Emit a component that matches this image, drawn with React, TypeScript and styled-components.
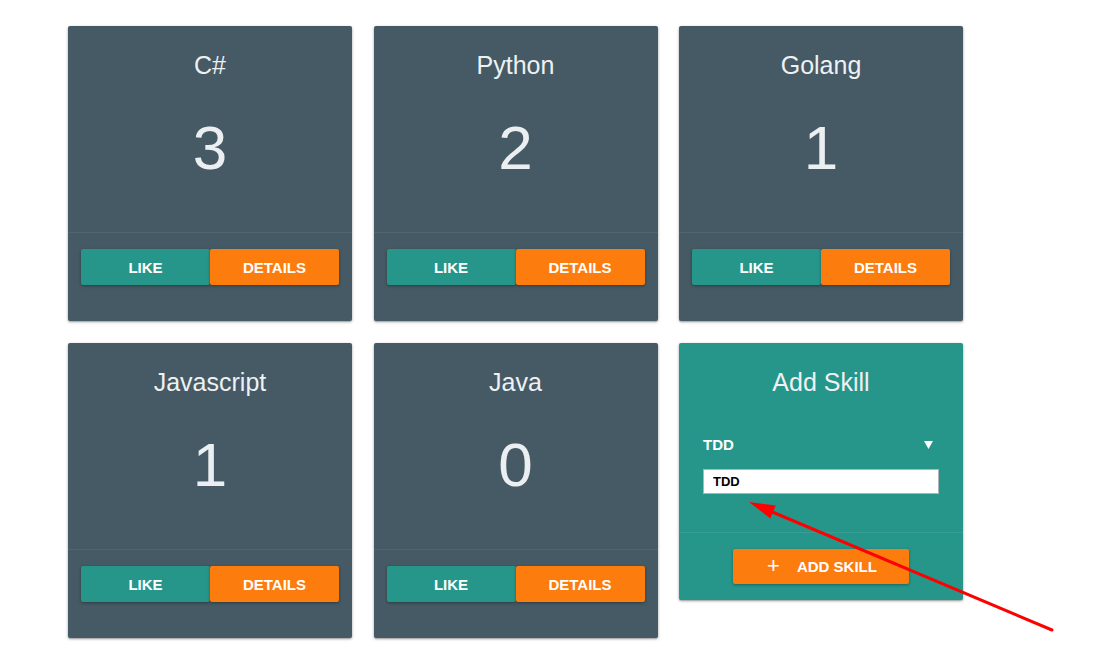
import React from "react";
import styled, { createGlobalStyle } from "styled-components";

const GlobalStyle = createGlobalStyle`
  html, body { margin: 0; padding: 0; background: #ffffff; }
  body { font-family: "Liberation Sans", Arial, Helvetica, sans-serif; }
  * { box-sizing: border-box; }
`;

const TEAL = "#26968a";
const ORANGE = "#fd7c0e";
const SLATE = "#455a64";

const Page = styled.div`
  position: relative;
  width: 1096px;
  height: 667px;
  padding: 26px 0 0 68px;
`;

const Grid = styled.div`
  display: grid;
  grid-template-columns: repeat(3, 284px);
  column-gap: 21.5px;
  row-gap: 22px;
  align-items: start;
`;

const Card = styled.div<{ $bg: string }>`
  background: ${(p) => p.$bg};
  border-radius: 2px;
  box-shadow: 0 1px 3px rgba(0, 0, 0, 0.35), 0 1px 1px rgba(0, 0, 0, 0.12);
  color: #eceff1;
  display: flex;
  flex-direction: column;
`;

const CardBody = styled.div`
  height: 206px;
  display: flex;
  flex-direction: column;
  align-items: center;
  padding-top: 24px;
`;

const Title = styled.div`
  font-size: 25px;
  line-height: 30px;
  font-weight: 400;
  color: #eef1f3;
  text-align: center;
`;

const Count = styled.div`
  margin-top: 33px;
  font-size: 62px;
  line-height: 70px;
  color: #eceff1;
`;

const Divider = styled.div`
  height: 1px;
  background: rgba(255, 255, 255, 0.07);
`;

const Actions = styled.div`
  display: flex;
  padding: 16px 13px 36px;
`;

const Btn = styled.button<{ $bg: string }>`
  flex: 1;
  height: 36px;
  border: none;
  border-radius: 2px;
  background: ${(p) => p.$bg};
  color: #ffffff;
  font-family: "Liberation Sans", Arial, sans-serif;
  font-weight: 700;
  font-size: 15px;
  box-shadow: 0 1px 3px rgba(0, 0, 0, 0.35);
  cursor: pointer;
  padding: 0;
`;

const FormBody = styled.div`
  display: flex;
  flex-direction: column;
  padding: 24px 24px 38px;
`;

const SelectRow = styled.div`
  margin-top: 33px;
  height: 29px;
  display: flex;
  align-items: center;
  justify-content: space-between;
  padding-right: 6px;
  font-size: 15px;
  font-weight: 700;
  color: #ffffff;
`;

const Input = styled.input`
  margin-top: 10px;
  height: 25px;
  width: 100%;
  border: 1px solid #b0b4b6;
  background: #ffffff;
  padding: 0 9px;
  font-family: "Liberation Sans", Arial, sans-serif;
  font-size: 13px;
  font-weight: 700;
  color: #000000;
  outline: none;
`;

const FormActions = styled.div`
  display: flex;
  justify-content: center;
  padding: 16px 0 16px;
`;

const AddBtn = styled.button`
  width: 176px;
  height: 35px;
  border: none;
  border-radius: 2px;
  background: ${ORANGE};
  color: #ffffff;
  font-family: "Liberation Sans", Arial, sans-serif;
  font-weight: 700;
  font-size: 15px;
  display: flex;
  align-items: center;
  justify-content: center;
  gap: 17px;
  box-shadow: 0 1px 3px rgba(0, 0, 0, 0.35);
  padding: 0 0 0 2px;
`;

const Plus = styled.span`
  font-size: 22px;
  font-weight: 400;
  line-height: 1;
  margin-top: -2px;
`;

const Overlay = styled.svg`
  position: absolute;
  left: 0;
  top: 0;
  pointer-events: none;
`;

const skills = [
  { name: "C#", likes: 3 },
  { name: "Python", likes: 2 },
  { name: "Golang", likes: 1 },
  { name: "Javascript", likes: 1 },
  { name: "Java", likes: 0 },
];

export default function App() {
  return (
    <>
      <GlobalStyle />
      <Page>
        <Grid>
          {skills.map((s) => (
            <Card key={s.name} $bg={SLATE}>
              <CardBody>
                <Title>{s.name}</Title>
                <Count>{s.likes}</Count>
              </CardBody>
              <Divider />
              <Actions>
                <Btn $bg={TEAL}>LIKE</Btn>
                <Btn $bg={ORANGE}>DETAILS</Btn>
              </Actions>
            </Card>
          ))}
          <Card $bg={TEAL}>
            <FormBody>
              <Title>Add Skill</Title>
              <SelectRow>
                <span>TDD</span>
                <svg width="9" height="8" viewBox="0 0 9 8">
                  <polygon points="0,0 9,0 4.5,8" fill="#ffffff" />
                </svg>
              </SelectRow>
              <Input defaultValue="TDD" />
            </FormBody>
            <Divider />
            <FormActions>
              <AddBtn>
                <Plus>+</Plus>
                <span>ADD SKILL</span>
              </AddBtn>
            </FormActions>
          </Card>
        </Grid>
        <Overlay width="1096" height="667" viewBox="0 0 1096 667">
          <line x1="1052" y1="630" x2="770" y2="511" stroke="#ff0000" strokeWidth="3" strokeLinecap="round" />
          <polygon points="749,502 770.3,518.4 775.7,505.6" fill="#ff0000" />
        </Overlay>
      </Page>
    </>
  );
}
